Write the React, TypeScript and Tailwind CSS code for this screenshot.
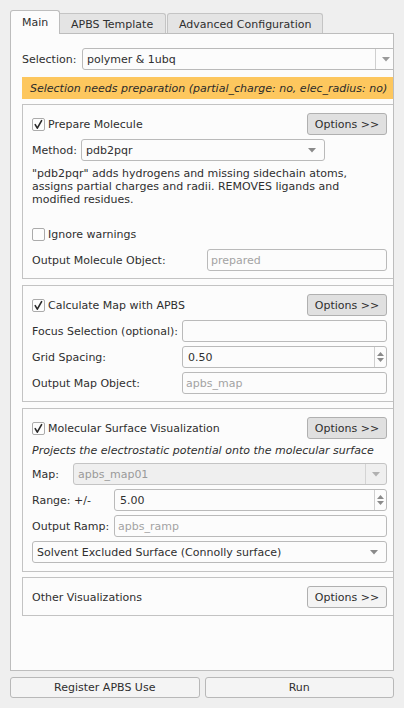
import React from "react";

const Check = ({ checked }: { checked?: boolean }) => (
  <span className="w-[13px] h-[13px] shrink-0 border border-[#ababab] bg-[#fdfdfd] rounded-[2px] flex items-center justify-center">
    {checked && (
      <svg width="11" height="11" viewBox="0 0 11 11">
        <polyline points="2.2,5.6 4.3,9.2 8.6,1.6" fill="none" stroke="#2a2a2a" strokeWidth="1.6" strokeLinecap="round" strokeLinejoin="round" />
      </svg>
    )}
  </span>
);

const Arrow = ({ color = "#7c7c7c" }: { color?: string }) => (
  <svg width="8" height="5" viewBox="0 0 8 5">
    <polygon points="0,0 8,0 4,4.5" fill={color} />
  </svg>
);

const OptionsBtn = ({ light }: { light?: boolean }) => (
  <div
    className={`ml-auto w-[80px] h-[22px] shrink-0 rounded-[3px] border border-[#b0b0b0] flex items-center justify-center text-[#2e2e2e] ${
      light ? "bg-[#f4f4f4]" : "bg-[#e0e0e0]"
    }`}
  >
    Options &gt;&gt;
  </div>
);

const TextInput = ({ value, placeholder, className = "" }: { value?: string; placeholder?: string; className?: string }) => (
  <div className={`h-[22px] border border-[#bababa] rounded-[3px] bg-[#fcfcfc] flex items-center px-[3px] ${className}`}>
    {value ? <span>{value}</span> : <span className="text-[#a3a3a3]">{placeholder}</span>}
  </div>
);

const SpinBox = ({ value, className = "" }: { value: string; className?: string }) => (
  <div className={`h-[22px] border border-[#bababa] rounded-[3px] bg-[#fcfcfc] flex items-stretch ${className}`}>
    <span className="flex-1 flex items-center pl-[5px]">{value}</span>
    <span className="w-[12px] border-l border-[#cfcfcf] flex flex-col items-center justify-center gap-[2px]">
      <svg width="7" height="4" viewBox="0 0 7 4">
        <polygon points="0,4 7,4 3.5,0" fill="#8a8a8a" />
      </svg>
      <svg width="7" height="4" viewBox="0 0 7 4">
        <polygon points="0,0 7,0 3.5,4" fill="#8a8a8a" />
      </svg>
    </span>
  </div>
);

export default function App() {
  return (
    <div className="w-[404px] h-[708px] bg-[#efefef] overflow-hidden text-[11px] leading-[13px] text-[#2f2f2f] font-['DejaVu_Sans','Liberation_Sans',sans-serif]">
      <div className="pt-[10px] px-[10px]">
        {/* Tabs */}
        <div className="flex items-end h-[23px]">
          <div className="relative z-10 w-[50px] h-[24px] -mb-[1px] border border-b-0 border-[#bdbdbd] rounded-t-[3px] bg-[#fcfcfc] flex items-start pt-[5px] pl-[11px]">
            Main
          </div>
          <div className="w-[106px] h-[20px] border border-b-0 border-l-0 border-[#c4c4c4] rounded-tr-[3px] bg-[#e4e4e4] flex items-center pl-[11px] pt-[1px]">
            APBS Template
          </div>
          <div className="w-[156px] h-[20px] border border-b-0 border-[#c4c4c4] rounded-t-[3px] bg-[#e4e4e4] flex items-center pl-[11px] pt-[1px] ml-[1px]">
            Advanced Configuration
          </div>
        </div>

        {/* Panel */}
        <div className="h-[638px] border border-[#bdbdbd] bg-[#fcfcfc] overflow-hidden">
          <div className="w-[375px] ml-[11px] pt-[14px]">
            {/* Selection */}
            <div className="flex items-center h-[22px]">
              <span className="w-[60px] shrink-0">Selection:</span>
              <div className="flex-1 h-[22px] border border-[#bababa] rounded-[3px] bg-[#fcfcfc] flex items-stretch">
                <span className="flex-1 flex items-center pl-[4px]">polymer &amp; 1ubq</span>
                <span className="w-[21px] border-l border-[#cfcfcf] flex items-center justify-center">
                  <Arrow color="#9a9a9a" />
                </span>
              </div>
            </div>

            {/* Banner */}
            <div className="mt-[7px] h-[22px] bg-[#fdc75e] flex items-center pl-[8px] italic text-[#2a2a2a]">
              Selection needs preparation (partial_charge: no, elec_radius: no)
            </div>

            {/* Group 1 */}
            <div className="mt-[5px] h-[175px] border border-[#c3c3c3] px-[9px] pt-[8px]">
              <div className="flex items-center h-[22px]">
                <Check checked />
                <span className="ml-[3px]">Prepare Molecule</span>
                <OptionsBtn />
              </div>
              <div className="flex items-center h-[22px] mt-[4px]">
                <span className="w-[49px] shrink-0">Method:</span>
                <div className="w-[244px] h-[22px] border border-[#bababa] rounded-[3px] bg-[#fcfcfc] flex items-center pl-[4px] pr-[8px]">
                  <span className="flex-1">pdb2pqr</span>
                  <Arrow color="#8a8a8a" />
                </div>
              </div>
              <p className="mt-[6px] leading-[13px]">
                "pdb2pqr" adds hydrogens and missing sidechain atoms,
                <br />
                assigns partial charges and radii. REMOVES ligands and
                <br />
                modified residues.
              </p>
              <div className="flex items-center h-[22px] mt-[17px]">
                <Check />
                <span className="ml-[3px]">Ignore warnings</span>
              </div>
              <div className="flex items-center h-[22px] mt-[4px]">
                <span>Output Molecule Object:</span>
                <TextInput placeholder="prepared" className="ml-auto w-[180px]" />
              </div>
            </div>

            {/* Group 2 */}
            <div className="mt-[6px] h-[117px] border border-[#c3c3c3] px-[9px] pt-[8px]">
              <div className="flex items-center h-[22px]">
                <Check checked />
                <span className="ml-[3px]">Calculate Map with APBS</span>
                <OptionsBtn />
              </div>
              <div className="flex items-center h-[22px] mt-[4px]">
                <span className="w-[150px] shrink-0">Focus Selection (optional):</span>
                <TextInput className="flex-1" />
              </div>
              <div className="flex items-center h-[22px] mt-[4px]">
                <span className="w-[150px] shrink-0">Grid Spacing:</span>
                <SpinBox value="0.50" className="flex-1" />
              </div>
              <div className="flex items-center h-[22px] mt-[4px]">
                <span className="w-[150px] shrink-0">Output Map Object:</span>
                <TextInput placeholder="apbs_map" className="flex-1" />
              </div>
            </div>

            {/* Group 3 */}
            <div className="mt-[6px] h-[164px] border border-[#c3c3c3] px-[9px] pt-[8px]">
              <div className="flex items-center h-[22px]">
                <Check checked />
                <span className="ml-[3px]">Molecular Surface Visualization</span>
                <OptionsBtn />
              </div>
              <p className="mt-[5px] italic leading-[13px]">
                Projects the electrostatic potential onto the molecular surface
              </p>
              <div className="flex items-center h-[22px] mt-[6px]">
                <span className="w-[41px] shrink-0">Map:</span>
                <div className="flex-1 h-[22px] border border-[#c4c4c4] rounded-[3px] bg-[#efefef] flex items-stretch text-[#9a9a9a]">
                  <span className="flex-1 flex items-center pl-[4px]">apbs_map01</span>
                  <span className="w-[21px] border-l border-[#d4d4d4] flex items-center justify-center">
                    <Arrow color="#b0b0b0" />
                  </span>
                </div>
              </div>
              <div className="flex items-center h-[22px] mt-[4px]">
                <span className="w-[82px] shrink-0">Range: +/-</span>
                <SpinBox value="5.00" className="flex-1" />
              </div>
              <div className="flex items-center h-[22px] mt-[4px]">
                <span className="w-[82px] shrink-0">Output Ramp:</span>
                <TextInput placeholder="apbs_ramp" className="flex-1" />
              </div>
              <div className="mt-[4px] h-[22px] border border-[#bababa] rounded-[3px] bg-[#fcfcfc] flex items-center pl-[4px] pr-[8px]">
                <span className="flex-1">Solvent Excluded Surface (Connolly surface)</span>
                <Arrow color="#8a8a8a" />
              </div>
            </div>

            {/* Group 4 */}
            <div className="mt-[5px] h-[39px] border border-[#c3c3c3] px-[9px] pt-[8px]">
              <div className="flex items-center h-[22px]">
                <span>Other Visualizations</span>
                <OptionsBtn light />
              </div>
            </div>
          </div>
        </div>

        {/* Bottom buttons */}
        <div className="mt-[6px] flex gap-[5px]">
          <div className="flex-1 h-[21px] border border-[#b8b8b8] rounded-[3px] bg-[#f4f4f4] flex items-center justify-center">
            Register APBS Use
          </div>
          <div className="flex-1 h-[21px] border border-[#b8b8b8] rounded-[3px] bg-[#f4f4f4] flex items-center justify-center">
            Run
          </div>
        </div>
      </div>
    </div>
  );
}
